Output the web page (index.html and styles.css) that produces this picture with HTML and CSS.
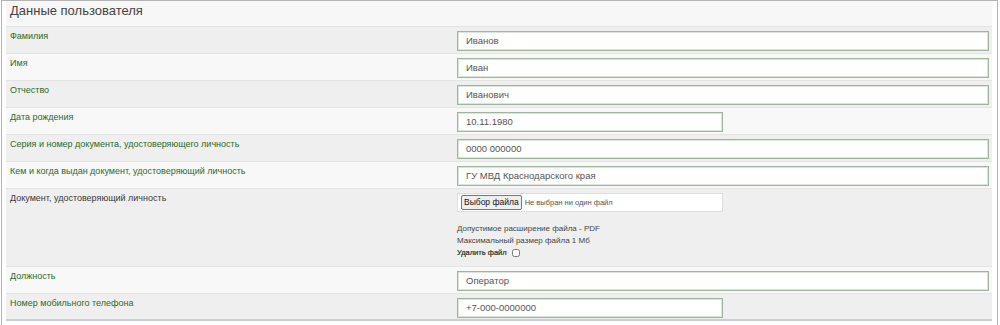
FILE: index.html
```html
<!DOCTYPE html>
<html lang="ru">
<head>
<meta charset="utf-8">
<title>Данные пользователя</title>
<link rel="stylesheet" href="styles.css">
</head>
<body>
<div class="frame">
  <div class="panel-title">Данные пользователя</div>
  <div class="rows">
    <div class="row odd">
      <div class="label">Фамилия</div>
      <div class="field"><input class="inp full" type="text" value="Иванов"></div>
    </div>
    <div class="row even">
      <div class="label">Имя</div>
      <div class="field"><input class="inp full" type="text" value="Иван"></div>
    </div>
    <div class="row odd">
      <div class="label">Отчество</div>
      <div class="field"><input class="inp full" type="text" value="Иванович"></div>
    </div>
    <div class="row even">
      <div class="label">Дата рождения</div>
      <div class="field"><input class="inp half" type="text" value="10.11.1980"></div>
    </div>
    <div class="row odd">
      <div class="label">Серия и номер документа, удостоверяющего личность</div>
      <div class="field"><input class="inp full" type="text" value="0000 000000"></div>
    </div>
    <div class="row even">
      <div class="label">Кем и когда выдан документ, удостоверяющий личность</div>
      <div class="field"><input class="inp full" type="text" value="ГУ МВД Краснодарского края"></div>
    </div>
    <div class="row odd doc">
      <div class="label dark">Документ, удостоверяющий личность</div>
      <div class="field">
        <div class="filebox"><span class="filebtn">Выбор файла</span><span class="filename">Не выбран ни один файл</span></div>
        <div class="notes">
          <div class="note">Допустимое расширение файла - PDF</div>
          <div class="note">Максимальный размер файла 1 Мб</div>
          <label class="note del">Удалить файл <input class="chk" type="checkbox"></label>
        </div>
      </div>
    </div>
    <div class="row even">
      <div class="label">Должность</div>
      <div class="field"><input class="inp full" type="text" value="Оператор"></div>
    </div>
    <div class="row odd last">
      <div class="label">Номер мобильного телефона</div>
      <div class="field"><input class="inp half" type="text" value="+7-000-0000000"></div>
    </div>
  </div>
</div>
</body>
</html>
```

FILE: styles.css
```css
* { box-sizing: border-box; }
html, body { margin: 0; padding: 0; background: #fff; }
body { font-family: "Liberation Sans", Arial, sans-serif; }

.frame {
  margin-left: 1px;
  width: 997px;
  height: 340px;
  border: 1px solid #b4b4b4;
  border-bottom: none;
  padding: 0 5px 0 4px;
  background: #fff;
}

.panel-title {
  height: 25px;
  padding: 2px 0 0 4px;
  font-size: 13px;
  line-height: 15px;
  color: #444;
  background: #f7f7f7;
}

.rows { border-bottom: 2px solid #c9cedb; }

.row {
  display: grid;
  grid-template-columns: 451px 1fr;
  height: 27px;
  border-top: 1px solid #e4e4e4;
  padding: 4px 3px 0 0;
}
.row.odd { background: #efefef; }
.row.even { background: #f8f8f8; }
.row.last { height: 26px; }
.row.doc { height: 78px; }

.label {
  padding: 0 0 0 4px;
  font-size: 9px;
  line-height: 11px;
  color: #2b6a2b;
}
.label.dark { color: #3a3a3a; }

.field { display: flex; flex-direction: column; }

.inp {
  height: 20px;
  padding: 0 0 1px 8px;
  border: 1px solid #9db69d;
  box-shadow: inset 0 0 0 1px #dbe5db;
  background: #fff;
  font-family: "Liberation Sans", Arial, sans-serif;
  font-size: 9.5px;
  color: #555;
  outline: none;
}
.inp.full { width: 532px; }
.inp.half { width: 266px; }

.filebox {
  width: 266px;
  height: 19px;
  border: 1px solid #dedede;
  background: #fff;
  display: flex;
  align-items: center;
  padding-left: 3px;
}
.filebtn {
  display: inline-block;
  height: 15px;
  line-height: 13px;
  padding: 0 2px;
  border: 1px solid #767676;
  border-radius: 2px;
  background: #efefef;
  color: #111;
  font-size: 8.5px;
}
.filename { margin-left: 3px; color: #555; font-size: 7.5px; }

.notes { margin-top: 11px; display: flex; flex-direction: column; }
.note {
  font-size: 8px;
  line-height: 12px;
  color: #444;
}
.note.del {
  color: #233023;
  display: flex;
  align-items: center;
  font-size: 7.5px;
  -webkit-text-stroke: 0.2px #233023;
}
.chk {
  width: 8px;
  height: 8px;
  margin: 0 0 0 5px;
}
```
